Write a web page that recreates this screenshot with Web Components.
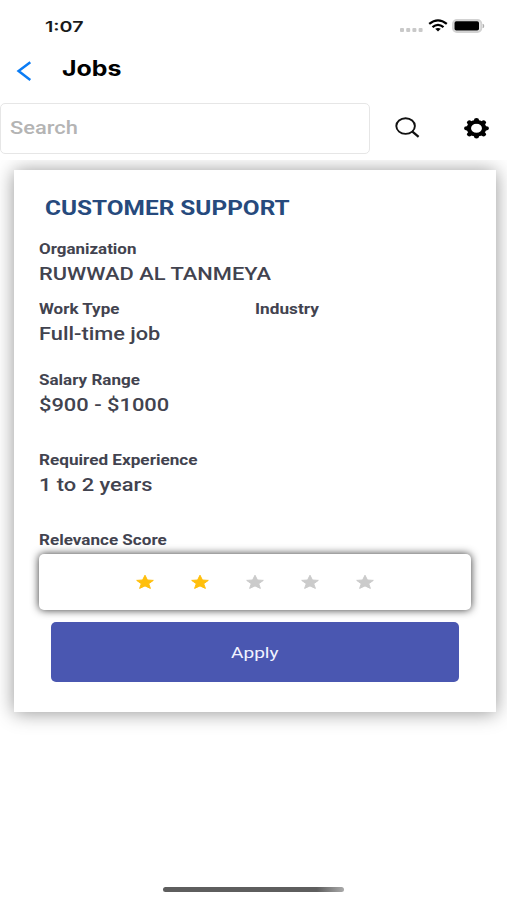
<!DOCTYPE html>
<html lang="en">
<head>
<meta charset="utf-8">
<meta name="viewport" content="width=device-width, initial-scale=1">
<title>Jobs</title>
<style>
  body {
    margin: 0;
    background: #fff;
    font-family: Roboto, sans-serif;
    overflow: hidden;
  }
</style>
</head>
<body>
<jobs-screen></jobs-screen>

<script>
// Text on one line, widened to the given width in pixels
class WideText extends HTMLElement {
  constructor() {
    super();
    this.attachShadow({ mode: "open" });
    this.shadowRoot.innerHTML = `
      <style>
        :host { display: block; width: max-content; white-space: nowrap; }
        span { display: inline-block; transform-origin: 0 50%; }
      </style>
      <span><slot></slot></span>
    `;
  }

  connectedCallback() {
    const span = this.shadowRoot.querySelector("span");
    const width = Number(this.getAttribute("width"));
    this.style.width = width + "px";
    span.style.transform = `scaleX(${width / span.offsetWidth})`;
  }
}

class StatusBar extends HTMLElement {
  constructor() {
    super();
    this.attachShadow({ mode: "open" });
    this.shadowRoot.innerHTML = `
      <style>
        :host {
          display: flex;
          justify-content: space-between;
          align-items: center;
          height: 52px;
          padding: 0 21px 0 45px;
          box-sizing: border-box;
          font: 600 15px/20px Inter, sans-serif;
          color: #1a1a1a;
        }
        wide-text { padding-top: 1px; }
        svg { display: block; }
      </style>
      <wide-text width="38"><slot></slot></wide-text>
      <svg width="88" height="20" viewBox="0 0 88 20">
        <g fill="#c9c9c9">
          <rect x="2" y="12" width="4" height="4" rx="1"/>
          <rect x="8.2" y="12" width="4" height="4" rx="1"/>
          <rect x="14.4" y="12" width="4" height="4" rx="1"/>
          <rect x="20.6" y="12" width="4" height="4" rx="1"/>
        </g>
        <g fill="none" stroke="#000" stroke-width="2.3">
          <path d="M31.2 7.9Q40 .9 48.8 7.9"/>
          <path d="M34.5 11.2Q40 6.6 45.5 11.2"/>
        </g>
        <path d="M37.2 12.8Q40 11 42.800 12.800L40 15.500z"/>
        <rect x="54.9" y="4" width="28.5" height="12" rx="4" fill="#e6e6e6" stroke="#d2d2d2" stroke-width="1.8"/>
        <rect x="56.500" y="5.200" width="24.500" height="9.300" rx="1.800"/>
        <path d="M85 8q2 2 0 4z" fill="#aaa" stroke="#aaa" stroke-width=".5"/>
      </svg>
    `;
  }
}

class NavHeader extends HTMLElement {
  constructor() {
    super();
    this.attachShadow({ mode: "open" });
    this.shadowRoot.innerHTML = `
      <style>
        :host {
          display: flex;
          align-items: flex-start;
          gap: 28px;
          height: 51px;
          padding-left: 16px;
          box-sizing: border-box;
          font: 700 21.5px/28px Inter, sans-serif;
          color: #000;
        }
        svg { margin-top: 8px; }
        wide-text { margin-top: 2px; }
      </style>
      <svg width="18" height="22" viewBox="0 0 18 22">
        <path d="M14.3 2.3L2.6 11l11.7 8.9" fill="none" stroke="#0a7cf5" stroke-width="2.5"/>
      </svg>
      <wide-text width="59"><slot></slot></wide-text>
    `;
  }
}

class SearchBar extends HTMLElement {
  constructor() {
    super();
    this.attachShadow({ mode: "open" });
    this.shadowRoot.innerHTML = `
      <style>
        :host { display: flex; align-items: center; height: 57px; }
        .field {
          display: flex;
          align-items: center;
          width: 370px;
          height: 51px;
          padding: 0 0 1px 9px;
          margin-bottom: 6px;
          box-sizing: border-box;
          border: 1px solid #e6e6e6;
          border-radius: 5px;
          font: 500 18px/26px Roboto, sans-serif;
          color: #b4b4b4;
        }
        .icons {
          display: flex;
          gap: 43px;
          margin: 0 0 7px 25px;
        }
      </style>
      <div class="field"><wide-text width="68"><slot></slot></wide-text></div>
      <div class="icons">
        <svg width="26" height="24" viewBox="0 0 26 24">
          <ellipse cx="10.6" cy="10.1" rx="9.3" ry="7.8" fill="none" stroke="#111" stroke-width="1.9"/>
          <path d="M17.1 15.400L23.600 20.900" stroke="#111" stroke-width="2.300"/>
        </svg>
        <svg width="26" height="24" viewBox="0 0 26 24">
          <g transform="translate(12.5 12.3) scale(1.2 1)">
            <circle r="6.400" fill="none" stroke="#000" stroke-width="3.700"/>
            <g stroke="#000" stroke-width="4.200" stroke-linecap="round">
              <path d="M0-8.200V-7M0 8.200V7M-8.300 0H-7M8.300 0H7M-5.900-5.900l.8.8M5.900 5.900l-.8-.8M-5.900 5.900l.8-.8M5.900-5.900l-.8.8"/>
            </g>
          </g>
        </svg>
      </div>
    `;
  }
}

class JobField extends HTMLElement {
  constructor() {
    super();
    this.attachShadow({ mode: "open" });
    this.shadowRoot.innerHTML = `
      <style>
        :host { display: block; color: #42434f; }
        .label { font: 700 14px/20px Roboto, sans-serif; }
        .value { height: 27px; padding-top: 1px; font: 500 18px/27px Roboto, sans-serif; }
      </style>
      <div class="label"><slot name="label"></slot></div>
      <div class="value"><slot></slot></div>
    `;
  }
}

class StarRating extends HTMLElement {
  constructor() {
    super();
    this.attachShadow({ mode: "open" });
    const score = Number(this.getAttribute("score"));
    const stars = [1, 2, 3, 4, 5].map(n => `
      <svg width="20" height="18" viewBox="0 0 20 18">
        <path fill="${n <= score ? "#ffbf0c" : "#cbcbcb"}" stroke="${n <= score ? "#ffbf0c" : "#cbcbcb"}" stroke-linejoin="round" d="M10 2.2L12.4 7L18.3 7.4L13.7 10.7L15.4 15.4L10 12.9L4.6 15.4L6.3 10.7L1.7 7.4L7.6 7z"/>
      </svg>`).join("");
    this.shadowRoot.innerHTML = `
      <style>
        :host {
          display: flex;
          justify-content: center;
          align-items: center;
          gap: 35px;
          height: 56px;
          padding-right: 1px;
          background: #fff;
          border-radius: 5px;
          box-shadow: 0 0 9px rgba(0, 0, 0, .8);
        }
      </style>
      ${stars}
    `;
  }
}

class ApplyButton extends HTMLElement {
  constructor() {
    super();
    this.attachShadow({ mode: "open" });
    this.shadowRoot.innerHTML = `
      <style>
        :host { display: block; }
        button {
          display: flex;
          justify-content: center;
          align-items: center;
          width: 100%;
          height: 60px;
          padding: 1px 0 0;
          border: none;
          border-radius: 5px;
          background: #4a57b1;
          color: #f1f3ff;
          font: 400 15.5px/22px Roboto, sans-serif;
        }
      </style>
      <button><wide-text width="48"><slot></slot></wide-text></button>
    `;
  }

  // The label is measured left-aligned, so the button's own centring must not apply to it
  connectedCallback() {
    this.shadowRoot.querySelector("wide-text").style.textAlign = "left";
  }
}

class JobCard extends HTMLElement {
  constructor() {
    super();
    this.attachShadow({ mode: "open" });
    this.shadowRoot.innerHTML = `
      <style>
        :host {
          display: block;
          height: 542px;
          padding: 24px 25px 0;
          box-sizing: border-box;
          background: #fff;
          box-shadow: 0 1px 18px rgba(0, 0, 0, .42);
        }
        .title {
          padding-left: 6px;
          margin-bottom: 17px;
          font: 700 20px/28px Roboto, sans-serif;
          color: #264a7d;
        }
      </style>
      <div class="title"><slot name="title"></slot></div>
      <slot></slot>
    `;
  }
}

class JobsScreen extends HTMLElement {
  constructor() {
    super();
    this.attachShadow({ mode: "open" });
    this.shadowRoot.innerHTML = `
      <style>
        :host {
          display: flex;
          flex-direction: column;
          width: 507px;
          height: 900px;
          background: #fff;
        }
        main {
          flex: 1;
          padding: 10px 11px 0 14px;
          overflow: hidden;
        }
        .row {
          display: grid;
          grid-template-columns: 216px 1fr;
          margin: 12px 0 23px;
        }
        .experience { margin: 32px 0; }
        .score {
          margin-bottom: 4px;
          font: 700 14px/20px Roboto, sans-serif;
          color: #42434f;
        }
        apply-button { margin: 12px 12px 0; }
        footer {
          display: flex;
          justify-content: center;
          height: 13px;
        }
        .home {
          width: 181px;
          height: 5px;
          border-radius: 3px;
          background: linear-gradient(90deg, #5e5e5e 85%, #aaa);
        }
      </style>
      <status-bar>1:07</status-bar>
      <nav-header>Jobs</nav-header>
      <search-bar>Search</search-bar>
      <main>
        <job-card>
          <wide-text slot="title" width="245">CUSTOMER SUPPORT</wide-text>
          <job-field>
            <wide-text slot="label" width="98">Organization</wide-text>
            <wide-text width="232">RUWWAD AL TANMEYA</wide-text>
          </job-field>
          <div class="row">
            <job-field>
              <wide-text slot="label" width="80">Work Type</wide-text>
              <wide-text width="121">Full-time job</wide-text>
            </job-field>
            <job-field>
              <wide-text slot="label" width="64">Industry</wide-text>
            </job-field>
          </div>
          <job-field>
            <wide-text slot="label" width="101">Salary Range</wide-text>
            <wide-text width="130">$900 - $1000</wide-text>
          </job-field>
          <job-field class="experience">
            <wide-text slot="label" width="158">Required Experience</wide-text>
            <wide-text width="114">1 to 2 years</wide-text>
          </job-field>
          <div class="score"><wide-text width="128">Relevance Score</wide-text></div>
          <star-rating score="2"></star-rating>
          <apply-button>Apply</apply-button>
        </job-card>
      </main>
      <footer><div class="home"></div></footer>
    `;
  }
}

window.customElements.define("wide-text", WideText);
window.customElements.define("status-bar", StatusBar);
window.customElements.define("nav-header", NavHeader);
window.customElements.define("search-bar", SearchBar);
window.customElements.define("job-field", JobField);
window.customElements.define("star-rating", StarRating);
window.customElements.define("apply-button", ApplyButton);
window.customElements.define("job-card", JobCard);
window.customElements.define("jobs-screen", JobsScreen);
</script>
</body>
</html>
